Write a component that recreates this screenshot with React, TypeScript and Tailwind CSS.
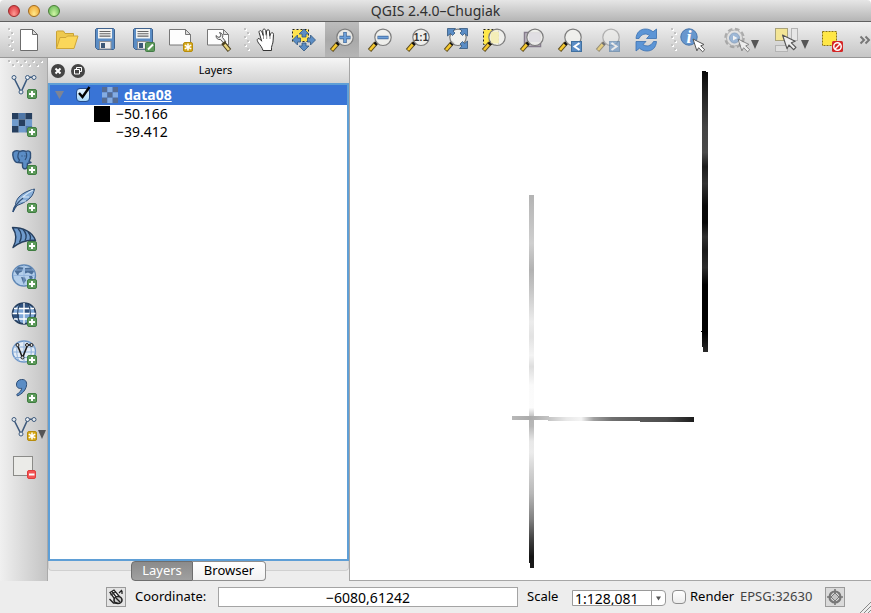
import React from "react";

type Kids = { children?: React.ReactNode };

const BLUE = "#5b8dc5";
const NAVY = "#2f4f78";

function Icon({ children }: Kids) {
  return (
    <svg viewBox="0 0 38 38" className="block h-[38px] w-[38px] shrink-0" aria-hidden="true">
      {children}
    </svg>
  );
}

function Tool({ label, active, children }: Kids & { label: string; active?: boolean }) {
  return (
    <button
      type="button"
      title={label}
      aria-label={label}
      className={
        active
          ? "mx-0.5 flex h-full w-[34px] shrink-0 items-center justify-center bg-linear-to-b from-[#bdbdbd] via-[#a9a9a9] to-[#b5b5b5]"
          : "flex h-full w-[38px] shrink-0 items-center justify-center"
      }
    >
      {children}
    </button>
  );
}

function ToolBarGrip() {
  return (
    <svg viewBox="0 0 10 26" className="h-[26px] w-[10px] shrink-0" aria-hidden="true">
      {[0, 1, 2, 3, 4, 5].map((i) => (
        <g key={i}>
          <rect x={i % 2 ? 6 : 3} y={2 + i * 4} width="2" height="2" fill="#fff" />
          <rect x={i % 2 ? 5 : 2} y={1 + i * 4} width="2" height="2" fill="#c2c2c2" />
        </g>
      ))}
    </svg>
  );
}

function PlusBadge() {
  return (
    <g>
      <rect x="22.5" y="22.5" width="9" height="9" rx="1.5" fill="#5d9a5b" stroke="#3f7d41" />
      <path d="M27 24v6M24 27h6" stroke="#fff" strokeWidth="2" />
    </g>
  );
}

function StarBadge() {
  return (
    <g>
      <rect x="21.5" y="21.5" width="9" height="9" rx="1.5" fill="#d6a91c" stroke="#b78c0c" />
      <path d="M26 22.5v7M22.8 24.2l6.4 3.6M22.8 27.8l6.4-3.6" stroke="#fff" strokeWidth="1.5" />
    </g>
  );
}

function Lens({ children, cx = 22, faded }: Kids & { cx?: number; faded?: boolean }) {
  return (
    <g opacity={faded ? 0.5 : 1}>
      <path d="M15 22L8.5 29.5" stroke="#5b4a1c" strokeWidth="4.4" />
      <path d="M14 23.2L9 29" stroke="#f6c92f" strokeWidth="2.6" />
      <path d="M16.5 20.8l-2.6 2.9" stroke="#111" strokeWidth="3.4" />
      <circle cx={cx} cy="16.3" r="8.2" fill="#f1f1ee" fillOpacity="0.86" stroke="#7d7d7d" strokeWidth="1.2" />
      {children}
    </g>
  );
}

function Cursor({ x, y, faded }: { x: number; y: number; faded?: boolean }) {
  return (
    <path
      transform={`translate(${x} ${y})`}
      opacity={faded ? 0.6 : 1}
      d="M0 0l11 5.5-3.3 1.3 4 4-2.1 2-4-4.1-1.7 3.2z"
      fill="#fff"
      stroke="#555"
      strokeWidth="1"
      strokeLinejoin="round"
    />
  );
}

function Floppy() {
  return (
    <g>
      <path d="M10.5 7.5h17l1 1v19l-1 1h-16l-2-2v-18z" fill={BLUE} stroke="#3f628e" />
      <rect x="12" y="8" width="14" height="9.5" fill="#f2f2f0" />
      <path d="M13.5 10.5h11M13.5 12.8h11M13.5 15.1h11" stroke="#666" strokeWidth="1.1" />
      <rect x="13.5" y="20.5" width="11.5" height="7.5" fill="#eee" stroke="#8b8f96" />
      <rect x="15" y="22" width="4" height="5" fill="#3c5877" />
    </g>
  );
}

function DropMark() {
  return (
    <svg viewBox="0 0 8 9" className="h-[9px] w-[8px] shrink-0" aria-hidden="true">
      <path d="M0 0h8L4 9z" fill="#555" />
    </svg>
  );
}

function VectorV({ stroke }: { stroke: string }) {
  return (
    <g stroke={stroke} fill="#e6ebf0">
      <path d="M9.5 12l6 12M17 23l5.5-12M24.5 10.300h3" fill="none" strokeWidth="1.6" />
      <circle cx="9" cy="10.500" r="2" />
      <circle cx="16" cy="25" r="2" />
      <circle cx="22.500" cy="10.500" r="2" />
      <circle cx="29" cy="10.500" r="2" />
    </g>
  );
}

const RASTER = [
  [0, 2, 0],
  [1, 0, 1],
  [0, 1, 2],
];

function Title() {
  return (
    <header className="flex h-[22px] shrink-0 items-center rounded-t border-b border-[#606060] bg-linear-to-b from-[#e6e6e6] to-[#b5b5b5] px-2">
      <div className="flex flex-1 items-center gap-2">
        <button type="button" aria-label="Close" className="size-3 rounded-full border border-[#9b2a2a] bg-radial-[at_50%_80%] from-[#ff9c95] to-[#d3232d]" />
        <button type="button" aria-label="Minimize" className="size-3 rounded-full border border-[#a26a1c] bg-radial-[at_50%_80%] from-[#ffe98c] to-[#ee9b25]" />
        <button type="button" aria-label="Zoom window" className="size-3 rounded-full border border-[#4a7d36] bg-radial-[at_50%_80%] from-[#d2f6a6] to-[#58b04a]" />
      </div>
      <h1 className="text-[14px] leading-5 text-[#303030]">QGIS 2.4.0–Chugiak</h1>
      <div className="flex-1" />
    </header>
  );
}

function TopTools() {
  return (
    <div role="toolbar" aria-label="Main tools" className="flex h-9 shrink-0 items-center overflow-hidden border-b border-[#989898] bg-linear-to-b from-[#f1f1f1] to-[#c6c6c6]">
      <div className="w-1.5 shrink-0" />
      <ToolBarGrip />
      <div className="-ml-1.5 flex h-full items-center">
        <Tool label="New project">
          <Icon>
            <path d="M10.500 8.500h12l5 5v16h-17z" fill="#fff" stroke="#6c6c6c" />
            <path d="M22.500 8.500v5h5z" fill="#ddd" stroke="#6c6c6c" />
          </Icon>
        </Tool>
        <Tool label="Open project">
          <Icon>
            <path d="M8.500 27.500v-17l1-.5h6l1.500 2.500h8.500v4" fill="#eec94e" stroke="#c9a235" />
            <path d="M8.500 27.500l3.500-11h6l1.500-1.500h10.500l-4 12.500z" fill="#fbd75a" stroke="#cfa638" strokeLinejoin="round" />
          </Icon>
        </Tool>
        <Tool label="Save project">
          <Icon><Floppy /></Icon>
        </Tool>
        <Tool label="Save project as">
          <Icon>
            <Floppy />
            <rect x="21.500" y="21.500" width="9" height="9" rx="1" fill="#5d9a5b" stroke="#437a48" />
            <path d="M24 28.500l5-5" stroke="#fff" strokeWidth="2" />
          </Icon>
        </Tool>
        <Tool label="New print composer">
          <Icon>
            <path d="M7.500 8.500h16l5 5v10.500h-21z" fill="#fdfdfd" stroke="#777" />
            <path d="M23.500 8.500v5h5z" fill="#ddd" stroke="#777" />
            <StarBadge />
          </Icon>
        </Tool>
        <Tool label="Composer manager">
          <Icon>
            <path d="M7.500 8.500h16l5 5v10.500h-21z" fill="#fdfdfd" stroke="#777" />
            <path d="M23.500 8.500v5h5z" fill="#ddd" stroke="#777" />
            <path d="M16 14.500c0 3 2 4.500 4.500 4l3.500 4 2-1.500-3.500-4.500c1-2.500-.5-4.500-3-5l1.500 2.500-1 2-2 .3z" fill="#eee" stroke="#555" />
            <path d="M23 21.500l6.500 8" stroke="#4c4121" strokeWidth="4.500" />
            <path d="M24.500 23.500l4.500 5.500" stroke="#ead57c" strokeWidth="2.600" />
          </Icon>
        </Tool>
        <div className="w-[9px] shrink-0 pl-1"><ToolBarGrip /></div>
        <Tool label="Pan map">
          <Icon>
            <path
              d="M16 29.500c-.8-3-2.500-5-4.500-7.500-1-1.500-2-3.500-.5-4.300 1.300-.6 2.500.8 3.700 2.500l-2.600-8.700c-.5-2 2-2.600 2.700-.8l1.500 4-.6-5c0-2 2.700-2.200 3-.2l.6 4.800.3-4.300c.3-1.800 2.900-1.600 2.900.2l.2 5 1-2.600c.6-1.500 3-1 2.800.8l-.4 6.500c-.2 3-1.300 4.500-1.600 6.500v3.100z"
              fill="#fff"
              stroke="#333"
              strokeLinejoin="round"
            />
            <path d="M16.500 14v4M19.700 13v5M23 14v4" stroke="#777" strokeWidth=".8" />
          </Icon>
        </Tool>
        <Tool label="Pan map to selection">
          <Icon>
            <rect x="7.500" y="8.500" width="16" height="12" fill="#ffe34d" stroke="#222" strokeDasharray="2 2" />
            <g fill={BLUE} stroke="#34587f" strokeWidth=".8" strokeLinejoin="round">
              <path d="M19 8l5 5h-3v3h-4v-3h-3z" />
              <path d="M19 30l5-5h-3v-3h-4v3h-3z" />
              <path d="M7.500 19l5-5v3h3v4h-3v3z" />
              <path d="M30.500 19l-5-5v3h-3v4h3v3z" />
            </g>
          </Icon>
        </Tool>
        <Tool label="Zoom in" active>
          <Icon>
            <Lens>
              <path d="M22 11v11M16.500 16.500h11" stroke="#365f93" strokeWidth="3.400" />
              <path d="M22 11.500v10M17 16.500h10" stroke="#6c9fd8" strokeWidth="2" />
            </Lens>
          </Icon>
        </Tool>
        <Tool label="Zoom out">
          <Icon>
            <Lens>
              <path d="M16.500 16.500h11" stroke="#365f93" strokeWidth="3.400" />
              <path d="M17 16.500h10" stroke="#6c9fd8" strokeWidth="2" />
            </Lens>
          </Icon>
        </Tool>
        <Tool label="Zoom to native resolution">
          <Icon>
            <Lens>
              <text x="22" y="20" textAnchor="middle" fontFamily="Liberation Sans, sans-serif" fontSize="10" fontWeight="700" fill="#333">1:1</text>
            </Lens>
          </Icon>
        </Tool>
        <Tool label="Zoom full">
          <Icon>
            <Lens cx={21} />
            <g fill={BLUE} stroke="#34587f" strokeWidth=".8" strokeLinejoin="round">
              <path d="M10.500 7.500h8l-2.500 2.500 2 2-2.500 2.500-2-2-3 2.500z" />
              <path d="M30.500 7.500h-8l2.500 2.500-2 2 2.500 2.500 2-2 3 2.500z" />
              <path d="M30.500 27.500h-8l2.500-2.500-2-2 2.500-2.500 2 2 3-2.500z" />
            </g>
          </Icon>
        </Tool>
        <Tool label="Zoom to selection">
          <Icon>
            <rect x="8.500" y="8.500" width="15" height="15" fill="#ffe84a" stroke="#222" strokeDasharray="2 2" />
            <Lens>
              <path d="M16 11h8v11h-8z" fill="#f4ecab" opacity=".7" />
            </Lens>
          </Icon>
        </Tool>
        <Tool label="Zoom to layer">
          <Icon>
            <rect x="11.500" y="11.500" width="16" height="14" fill="#c5bec9" stroke="#857b8b" strokeWidth="1.500" />
            <Lens>
              <path d="M16 11.500h11v9.500h-11z" fill="#dcd8df" opacity=".7" />
            </Lens>
          </Icon>
        </Tool>
        <Tool label="Zoom last">
          <Icon>
            <Lens />
            <rect x="20.500" y="20.500" width="10" height="10" fill={BLUE} stroke="#41709f" />
            <path d="M28.500 22l-5 3.500 5 3.500" fill="none" stroke="#fff" strokeWidth="2" />
          </Icon>
        </Tool>
        <Tool label="Zoom next">
          <Icon>
            <Lens faded />
            <g opacity=".55">
              <rect x="20.500" y="20.500" width="10" height="10" fill={BLUE} stroke="#41709f" />
              <path d="M22.500 22l5 3.500-5 3.500" fill="none" stroke="#fff" strokeWidth="2" />
            </g>
          </Icon>
        </Tool>
        <Tool label="Refresh">
          <Icon>
            <g fill="#5c95d6" stroke="#3a70b0" strokeWidth=".8" strokeLinejoin="round">
              <path d="M9 17.500c.5-6 4-9.500 9.500-9.500 3 0 5.500 1 7.500 2.800l3.500-2.800v9.500h-10l3-3c-3.500-2.500-8-1.800-10.500 3z" />
              <path d="M29.500 20.500c-.5 6-4 9.500-9.500 9.500-3 0-5.500-1-7.500-2.800l-3.500 2.800v-9.500h10l-3 3c3.500 2.500 8 1.800 10.500-3z" />
            </g>
          </Icon>
        </Tool>
        <div className="w-[9px] shrink-0 pl-1"><ToolBarGrip /></div>
        <Tool label="Identify features">
          <Icon>
            <circle cx="15" cy="16" r="8.200" fill="#6797ce" stroke="#4a76ab" />
            <text x="15" y="22" textAnchor="middle" fontFamily="Liberation Serif, serif" fontStyle="italic" fontWeight="700" fontSize="18" fill="#fff">i</text>
            <Cursor x={19} y={18} />
          </Icon>
        </Tool>
        <div className="ml-[5px] flex h-full items-center">
          <Tool label="Run feature action">
            <Icon>
              <g opacity=".65">
                <circle cx="17.500" cy="17" r="9" fill="none" stroke="#8e8e8e" strokeWidth="2.500" strokeDasharray="4.500 2.600" />
                <circle cx="17.500" cy="17" r="8" fill="#e2e2e2" stroke="#999" />
                <circle cx="17.500" cy="17" r="5" fill="#7ba3d2" stroke="#6489b5" />
                <path d="M16 14.500l4.500 2.500-4.500 2.500z" fill="#fff" />
              </g>
              <Cursor x={21} y={18} faded />
            </Icon>
          </Tool>
          <span className="-ml-1 pt-2.5"><DropMark /></span>
        </div>
        <div className="ml-[9px] flex h-full items-center">
          <Tool label="Select features">
            <Icon>
              <rect x="7.500" y="7.500" width="12" height="12" fill="#f3e595" stroke="#aaa37a" />
              <rect x="23.500" y="7.500" width="6" height="12" fill="#e6e6e6" stroke="#b4b4b4" />
              <rect x="7.500" y="24.500" width="12" height="6" fill="#dedede" stroke="#b4b4b4" />
              <g transform="translate(14.500 14) scale(1.150)">
                <path d="M0 0l11 5.500-3.300 1.300 4 4-2.100 2-4-4.100-1.700 3.200z" fill="#eee" stroke="#555" strokeLinejoin="round" />
              </g>
            </Icon>
          </Tool>
          <span className="-ml-[5px] pt-2.5"><DropMark /></span>
        </div>
        <div className="ml-[5px]">
          <Tool label="Deselect features">
            <Icon>
              <rect x="8.500" y="10.500" width="14" height="14" fill="#ffe745" stroke="#8a7411" strokeDasharray="2 1" />
              <rect x="18" y="20" width="11" height="11" rx="1.500" fill="#d42626" />
              <circle cx="23.500" cy="25.500" r="3.700" fill="none" stroke="#fff" strokeWidth="1.500" />
              <path d="M21 28l5-5" stroke="#fff" strokeWidth="1.500" />
            </Icon>
          </Tool>
        </div>
      </div>
      <button type="button" aria-label="More tools" className="ml-auto shrink-0">
        <svg viewBox="0 0 12 10" className="h-[10px] w-[12px]" aria-hidden="true">
          <path d="M1.500 1.500L5 5 1.500 8.500M6.500 1.500L10 5 6.500 8.500" fill="none" stroke="#777" strokeWidth="2" />
        </svg>
      </button>
    </div>
  );
}

function SideTools() {
  const side = "block h-[38px] w-[38px] shrink-0";
  return (
    <div role="toolbar" aria-label="Manage layers" className="flex w-12 shrink-0 flex-col items-center overflow-hidden border-r border-[#aaaaaa] bg-linear-to-r from-[#f0f0f0] to-[#c4c4c4]">
      <svg viewBox="0 0 38 9" className="h-[9px] w-[38px] shrink-0" aria-hidden="true">
        {[0, 1, 2, 3, 4, 5, 6, 7, 8].map((i) => (
          <g key={i}>
            <rect x={4 + i * 4} y={i % 2 ? 7 : 3} width="2" height="2" fill="#fff" />
            <rect x={3 + i * 4} y={i % 2 ? 6 : 2} width="2" height="2" fill="#c0c0c0" />
          </g>
        ))}
      </svg>
      <button type="button" aria-label="Add vector layer" className={side}>
        <Icon><VectorV stroke="#3c5b80" /><PlusBadge /></Icon>
      </button>
      <button type="button" aria-label="Add raster layer" className={side}>
        <Icon>
          {RASTER.map((row, r) =>
            row.map((c, i) => (
              <rect key={`${r}-${i}`} x={7 + i * 6.7} y={8 + r * 6.5} width="6.700" height="6.500" fill={["#263f5f", "#6f9bcd", "#4f77a8"][c]} />
            )),
          )}
          <PlusBadge />
        </Icon>
      </button>
      <button type="button" aria-label="Add PostGIS layer" className={side}>
        <Icon>
          <path d="M8 9.500c2-2.500 5-2 7-1 2-1 4-1 6 0 2-1.200 4.500-.5 4.500 1.500.5 3 0 6-1.500 8.500l2 1-3.500 1c-.5 2 .5 4-1.500 5-2 .8-3.500-.2-3.500-2.500v-3l-4-.5c-3 .5-4-1.500-5-4-.8-2-1-4-.5-6z" fill={BLUE} stroke={NAVY} strokeWidth="1.400" strokeLinejoin="round" />
          <path d="M14 9c-1.500 3-1.500 6 .5 8l-1 2.500M21 9.500c1.500 3 .5 5.500-1 7.500M17 12.500v1M20 12.500v1" fill="none" stroke={NAVY} strokeWidth="1.200" />
          <PlusBadge />
        </Icon>
      </button>
      <button type="button" aria-label="Add SpatiaLite layer" className={side}>
        <Icon>
          <path d="M8 31c0-3 1-5 2.500-7 0-6 6-13 19-16-1 4-1.500 6-4.500 9-4 4-9 6-13 7.500-1.500 2-2.500 4-4 6.500z" fill="#8ab0da" stroke={NAVY} strokeLinejoin="round" />
          <path d="M11 24c4-6 9-11 17-15M15 20h6M18 16h6" fill="none" stroke="#d7e7f6" strokeWidth="1.200" />
          <path d="M8 31c1-5 5-10 10-14" fill="none" stroke={NAVY} strokeWidth="1.300" />
          <PlusBadge />
        </Icon>
      </button>
      <button type="button" aria-label="Add MSSQL layer" className={side}>
        <Icon>
          <path d="M7.500 8.500c10 0 20 4 23 13-8-1-15 1-22.500 7 4-7 3.500-14-.5-20z" fill="#6f9bcd" stroke="#263f5f" strokeWidth="1.400" strokeLinejoin="round" />
          <path d="M13 9.500c4 4 4 9 1.500 14M18 10.500c4 4 4 7 2 11M23 13c3 3 3 5 2 8" fill="none" stroke="#263f5f" strokeWidth="1.300" />
          <PlusBadge />
        </Icon>
      </button>
      <button type="button" aria-label="Add WMS layer" className={side}>
        <Icon>
          <ellipse cx="19" cy="18.500" rx="11.500" ry="10.500" fill="#b4cfeb" stroke="#5f87b5" strokeWidth="1.300" />
          <path d="M9.500 14l4-4 5 .5-1.500 4-3 1.500-1 3zM20 11l6-.5 3 4-2 3-4-2-3 1zM16 20l4 .5 1 3-2.500 3.500zM24 19l3 0 1 2-3 2z" fill="#4c6f99" />
          <path d="M8 18.500h22M19 8v21M9.500 13h19" stroke="#8fb1da" strokeWidth=".8" />
          <PlusBadge />
        </Icon>
      </button>
      <button type="button" aria-label="Add WCS layer" className={side}>
        <Icon>
          <ellipse cx="19" cy="18.500" rx="11.500" ry="10.500" fill="#7fa8d8" stroke="#263f5f" strokeWidth="1.600" />
          <path d="M14.500 9h9v4.500h-9zM8 18.500h6v5H9zM19 13.500h5v5h-5z" fill="#30527f" />
          <path d="M9 13.500h20M7.500 18.500h23M9 24h20M19 8v21" stroke="#fff" strokeWidth="1.300" />
          <path d="M15 8.500c-3 6-3 14 0 20M23 8.500c3 6 3 14 0 20" fill="none" stroke="#263f5f" strokeWidth="1.300" />
          <PlusBadge />
        </Icon>
      </button>
      <button type="button" aria-label="Add WFS layer" className={side}>
        <Icon>
          <ellipse cx="19" cy="18.500" rx="11.500" ry="10.500" fill="#e4ecf5" stroke="#6d96c8" strokeWidth="1.300" />
          <path d="M8 14h22M7.500 19h23M9 24.500h20M19 8v21M14 9c-3 6-3 13 0 19M24 9c3 6 3 13 0 19" fill="none" stroke="#8fb1da" />
          <g fill="#ddd" stroke="#1c1c1c">
            <path d="M13 13.500l4 10M18 23.500l4-10M23 12h3" fill="none" strokeWidth="1.600" />
            <circle cx="12.500" cy="12" r="1.500" /><circle cx="17.500" cy="24.500" r="1.500" />
            <circle cx="22" cy="12" r="1.500" /><circle cx="26.500" cy="12" r="1.500" />
          </g>
          <PlusBadge />
        </Icon>
      </button>
      <button type="button" aria-label="Add delimited text layer" className={side}>
        <Icon>
          <path d="M16.500 8.500c5-.5 6 4 4.500 8-1.200 3.500-4 6.500-8.500 8.500l-.8-1.500c3-2 4.800-4 5-6.200-3 .8-5.500-1-5.200-4.300.2-2.500 2-4.300 5-4.500z" fill={BLUE} stroke={NAVY} />
          <PlusBadge />
        </Icon>
      </button>
      <div className="flex w-full items-center pl-[5px]">
        <button type="button" aria-label="New shapefile layer" className={side}>
          <Icon>
            <VectorV stroke="#3f5a7c" />
            <g transform="translate(1 1)"><StarBadge /></g>
          </Icon>
        </button>
        <span className="-ml-[5px] pt-3"><DropMark /></span>
      </div>
      <button type="button" aria-label="Remove layer" className={side}>
        <Icon>
          <rect x="8.500" y="9.500" width="19" height="19" fill="#ebebe8" stroke="#8b8b88" />
          <rect x="22.500" y="23.500" width="8" height="8" rx="1.500" fill="#f25555" stroke="#e03c3c" />
          <path d="M24 27.500h5.500" stroke="#fff" strokeWidth="2" />
        </Icon>
      </button>
    </div>
  );
}

function LayersDock() {
  return (
    <section className="flex w-[301px] shrink-0 flex-col bg-[#ededed]">
      <div className="flex h-[25px] shrink-0 items-center bg-linear-to-b from-[#f6f6f6] to-[#d3d3d3] px-[3px]">
        <div className="flex items-center gap-1.5">
          <button type="button" aria-label="Close panel">
            <svg viewBox="0 0 14 14" className="size-3.5" aria-hidden="true">
              <circle cx="7" cy="7" r="7" fill="#444" />
              <path d="M4.500 4.500l5 5M9.500 4.500l-5 5" stroke="#fff" strokeWidth="2" />
            </svg>
          </button>
          <button type="button" aria-label="Float panel">
            <svg viewBox="0 0 14 14" className="size-3.5" aria-hidden="true">
              <circle cx="7" cy="7" r="7" fill="#444" />
              <path d="M5.500 5.500v-2h5v4h-2M3.500 5.500h5v4.500h-5z" fill="none" stroke="#fff" />
            </svg>
          </button>
        </div>
        <h2 className="flex-1 text-center text-[11px]">Layers</h2>
      </div>
      <div className="flex-1 border-2 border-[#5f9fd6] bg-white">
        <div className="flex h-5 items-center bg-[#3974d6] pl-[5px] text-white">
          <svg viewBox="0 0 9 8" className="h-2 w-[9px]" aria-hidden="true">
            <path d="M0 0h9L4.500 8z" fill="#7d8494" />
          </svg>
          <label className="flex items-center">
            <span className="relative ml-3 mr-3 block size-3.5">
              <input type="checkbox" defaultChecked className="peer block size-3.5 appearance-none rounded-sm border border-[#234c8d] bg-linear-to-b from-[#e8f5ff] to-[#a5d5f7]" />
              <svg viewBox="0 0 16 16" className="pointer-events-none absolute -top-0.5 left-0 hidden size-4 peer-checked:block" aria-hidden="true">
                <path d="M3 7l3.500 4L13.500 1" fill="none" stroke="#000" strokeWidth="2.400" />
              </svg>
            </span>
            <svg viewBox="0 0 16 16" className="mr-1.5 size-4" aria-hidden="true">
              {[0, 1, 2, 3, 4, 5, 6, 7, 8].map((i) => (
                <rect key={i} x={(i % 3) * 5.33} y={Math.floor(i / 3) * 5.33} width="5.400" height="5.400" fill={i % 2 ? "#84ace2" : "#566c92"} />
              ))}
            </svg>
            <span className="text-[14px] leading-5 font-bold underline">data08</span>
          </label>
        </div>
        <ul className="pl-11 text-[14px] leading-[18px]">
          <li className="flex items-center gap-1.5"><span className="size-4 bg-black" />−50.166</li>
          <li className="flex items-center gap-1.5"><span className="size-4 bg-white" />−39.412</li>
        </ul>
      </div>
      <div className="flex h-5 shrink-0">
        <div className="h-2.5 flex-1 rounded-bl border-b border-l border-[#d0d0d0] bg-[#e4e4e4]" />
        <div role="tablist" className="flex text-[13px]">
          <button type="button" role="tab" aria-selected="true" className="w-[62px] rounded-l border border-[#6e6e6e] bg-linear-to-b from-[#8b8b8b] to-[#a0a0a0] pb-0.5 leading-4 text-white">Layers</button>
          <button type="button" role="tab" aria-selected="false" className="w-[73px] rounded-r border border-l-0 border-[#8f8f8f] bg-linear-to-b from-white to-[#f2f2f2] pb-0.5 leading-4">Browser</button>
        </div>
        <div className="h-2.5 flex-1 rounded-br border-r border-b border-[#d0d0d0] bg-[#e4e4e4]" />
      </div>
    </section>
  );
}

function Ramp({ id, stops, horizontal }: { id: string; stops: [number, string][]; horizontal?: boolean }) {
  return (
    <linearGradient id={id} x1="0" y1="0" x2={horizontal ? 1 : 0} y2={horizontal ? 0 : 1}>
      {stops.map(([at, color]) => (
        <stop key={at} offset={at} stopColor={color} />
      ))}
    </linearGradient>
  );
}

function MapCanvas() {
  return (
    <main className="min-w-0 flex-1 overflow-hidden border-b border-l border-[#a6a6a6] bg-white">
      <svg viewBox="350 58 521 521" className="block h-[521px] w-[521px]" role="img" aria-label="Raster strips">
        <defs>
          <Ramp id="east" stops={[[0, "#080808"], [0.08, "#222"], [0.2, "#444"], [0.29, "#4a4a4a"], [0.34, "#1c1c1c"], [0.4, "#333"], [0.48, "#0a0a0a"], [0.54, "#080808"], [0.59, "#303030"], [0.64, "#1a1a1a"], [0.7, "#2c2c2c"], [0.76, "#000"], [0.93, "#000"], [1, "#2a2a2a"]]} />
          <Ramp id="west" stops={[[0, "#b4b4b4"], [0.08, "#c4c4c4"], [0.13, "#cfcfcf"], [0.2, "#b2b2b2"], [0.25, "#c4c4c4"], [0.34, "#ececec"], [0.38, "#e2e2e2"], [0.43, "#f4f4f4"], [0.46, "#dedede"], [0.51, "#fafafa"], [0.57, "#fcfcfc"], [0.6, "#b4b4b4"], [0.62, "#b8b8b8"], [0.66, "#e8e8e8"], [0.69, "#ececec"], [0.74, "#d2d2d2"], [0.8, "#b8b8b8"], [0.87, "#808080"], [0.92, "#444"], [0.97, "#141414"], [1, "#1b1b1b"]]} />
          <Ramp id="cross" horizontal stops={[[0, "#b8b8b8"], [0.1, "#aaa"], [0.2, "#c4c4c4"], [0.3, "#e8e8e8"], [0.38, "#f4f4f4"], [0.45, "#a0a0a0"], [0.55, "#707070"], [0.7, "#5a5a5a"], [0.85, "#4c4c4c"], [1, "#1c1c1c"]]} />
        </defs>
        <path d="M702 71h4v1h2v280h-5v-5h-1v-15h-1v-1h1z" fill="url(#east)" />
        <path d="M529 195h5v373h-4v-5h-1z" fill="url(#west)" />
        <path d="M512 416h37v1h145v5h-54v-1h-92v-1h-36z" fill="url(#cross)" />
      </svg>
    </main>
  );
}

function StatusBar() {
  return (
    <footer className="flex h-8 shrink-0 items-center bg-[#ededed] pl-[106px] text-[13px]">
      <button type="button" aria-label="Toggle extents" className="size-5 shrink-0 border border-[#9a9a9a] bg-[#e4e4e4] p-px">
        <svg viewBox="0 0 16 16" className="size-4" aria-hidden="true">
          <path d="M2 3.500L6 1l5 6-4 3.500z" fill="#fff" stroke="#222" strokeWidth="1.300" />
          <path d="M4 2.500l4.500 6M2.500 6L8 3M11 4l3-3M14 5V2" stroke="#222" strokeWidth="1.300" />
          <ellipse cx="10" cy="11" rx="4" ry="3.500" fill="#ccc" stroke="#222" strokeWidth="1.600" />
          <path d="M1.500 10l4 4h4M8 9l4 4" fill="none" stroke="#222" strokeWidth="1.400" />
        </svg>
      </button>
      <label htmlFor="coordinate" className="ml-2 w-[84px] shrink-0 pl-px">Coordinate:</label>
      <input id="coordinate" defaultValue="−6080,61242" className="h-5 w-0 flex-1 border border-[#a4a4a4] bg-white text-center text-[14px]" />
      <label htmlFor="scale" className="ml-2 w-[46px] shrink-0 pl-px">Scale</label>
      <div className="mt-0.5 flex h-4 w-[94px] shrink-0 rounded-r-sm border border-[#9a9a9a] bg-white">
        <select id="scale" defaultValue="1:128,081" className="w-[79px] appearance-none border-r border-[#9a9a9a] pl-0.5 text-[14px] leading-[16px]">
          <option>1:128,081</option>
        </select>
        <svg viewBox="0 0 13 14" className="h-3.5 w-[13px]" aria-hidden="true">
          <path d="M4 5.500h5L6.500 9.500z" fill="#555" />
        </svg>
      </div>
      <label className="ml-1.5 flex w-[68px] shrink-0 items-center gap-1">
        <input type="checkbox" className="size-3.5 appearance-none rounded-sm border border-[#8e8e8e] bg-linear-to-b from-white to-[#ececec]" />
        Render
      </label>
      <span className="w-[85px] shrink-0 text-[13px] text-[#444]">EPSG:32630</span>
      <button type="button" aria-label="CRS status" className="size-5 shrink-0 border border-[#9a9a9a] bg-[#dadada] p-px">
        <svg viewBox="0 0 16 16" className="size-4" fill="none" stroke="#777" aria-hidden="true">
          <circle cx="8" cy="8" r="5.500" strokeWidth="2.200" />
          <path d="M8 0v4M8 12v4M0 8h4M12 8h4" strokeWidth="1.600" />
          <path d="M8 4l4 4-4 4-4-4z" fill="#c4c4c4" />
        </svg>
      </button>
      <svg viewBox="0 0 12 12" className="ml-3.5 h-3 w-3 shrink-0 self-end" aria-hidden="true">
        <path d="M1 12L12 1M5 12l7-7M9 12l3-3" stroke="#888" />
      </svg>
    </footer>
  );
}

export default function App() {
  return (
    <div className="flex h-screen flex-col overflow-hidden bg-white font-['Noto_Sans','Open_Sans',sans-serif] text-black">
      <Title />
      <TopTools />
      <div className="flex min-h-0 flex-1">
        <SideTools />
        <LayersDock />
        <MapCanvas />
      </div>
      <StatusBar />
    </div>
  );
}
